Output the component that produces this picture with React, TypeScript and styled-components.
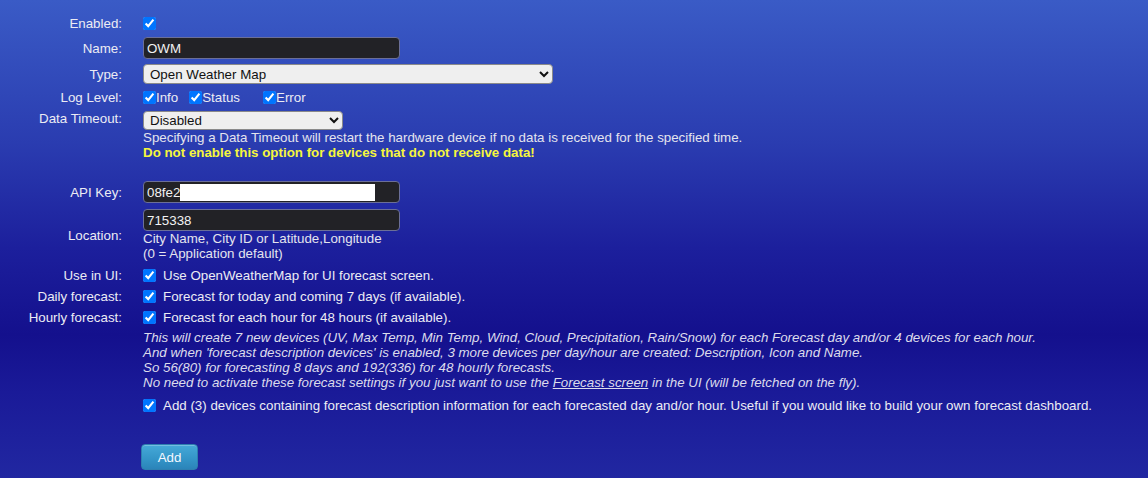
import React from 'react';
import styled, { createGlobalStyle } from 'styled-components';

const GlobalStyle = createGlobalStyle`
  html, body {
    margin: 0;
    padding: 0;
  }
  body {
    width: 1148px;
    height: 478px;
    overflow: hidden;
    font-family: 'Liberation Sans', Arial, sans-serif;
    font-size: 13.33px;
    color: #ececf4;
    background: linear-gradient(
      180deg,
      #3a5bc6 0%,
      #2a3cb0 30%,
      #1c1f9c 52%,
      #14108d 70%,
      #1a1a98 82%,
      #2127a1 100%
    );
  }
`;

const Form = styled.div`
  display: flex;
  flex-direction: column;
  width: 1148px;
`;

const Row = styled.div<{ $mt: number; $h?: number }>`
  display: grid;
  grid-template-columns: 122px 1fr;
  column-gap: 21px;
  align-items: center;
  margin-top: ${(p) => p.$mt}px;
  min-height: ${(p) => (p.$h ? `${p.$h}px` : 'auto')};
`;

const Label = styled.div<{ $top?: boolean }>`
  text-align: right;
  line-height: 15px;
  white-space: nowrap;
  align-self: ${(p) => (p.$top ? 'start' : 'center')};
`;

const Value = styled.div`
  display: flex;
  flex-direction: column;
  align-items: flex-start;
  line-height: 15px;
`;

const Inline = styled.div`
  display: flex;
  align-items: center;
  white-space: nowrap;
`;

const Check = styled.input.attrs({ type: 'checkbox', defaultChecked: true })`
  width: 13px;
  height: 13px;
  margin: 0;
  accent-color: #0075ff;
`;

const CheckText = styled.span<{ $gap?: number; $mr?: number }>`
  margin-left: ${(p) => p.$gap ?? 0}px;
  margin-right: ${(p) => p.$mr ?? 0}px;
`;

const TextInput = styled.input`
  box-sizing: border-box;
  width: 257px;
  height: 22px;
  margin: 0;
  padding: 0 3px;
  background: #222226;
  color: #f2f2f2;
  border: 1px solid #6b6f98;
  border-radius: 4px;
  font-family: 'Liberation Sans', Arial, sans-serif;
  font-size: 13.33px;
  outline: none;
`;

const InputWrap = styled.div`
  position: relative;
`;

const Redacted = styled.span`
  position: absolute;
  left: 37px;
  top: 3px;
  width: 195px;
  height: 17px;
  background: #ffffff;
`;

const Select = styled.select<{ $w: number; $h: number }>`
  box-sizing: border-box;
  width: ${(p) => p.$w}px;
  height: ${(p) => p.$h}px;
  margin: 0;
  padding: 0 2px;
  background: #efefef;
  color: #111;
  border: 1px solid #8a8a8a;
  border-radius: 4px;
  font-family: 'Liberation Sans', Arial, sans-serif;
  font-size: 13.33px;
`;

const Help = styled.div`
  color: #e4e4ee;
  white-space: nowrap;
`;

const Warning = styled.div`
  color: #f6f63c;
  font-weight: bold;
  white-space: nowrap;
`;

const Italic = styled.div`
  margin-left: 143px;
  margin-top: 3px;
  font-style: italic;
  line-height: 15px;
  color: #dcdcec;
  white-space: nowrap;

  a {
    color: inherit;
    text-decoration: underline;
  }
`;

const AddButton = styled.button`
  margin: 29px 0 0 141px;
  width: 57px;
  height: 26px;
  border: 1px solid #2d7fb0;
  border-radius: 4px;
  background: linear-gradient(180deg, #45a9d8 0%, #3394c7 60%, #2b84b9 100%);
  color: #f4f8ff;
  font-family: 'Liberation Sans', Arial, sans-serif;
  font-size: 13.33px;
  padding: 0;
  box-shadow: inset 0 1px 0 rgba(255, 255, 255, 0.25);
`;

const App = () => {
  return (
    <>
      <GlobalStyle />
      <Form>
        <Row $mt={13} $h={20}>
          <Label>Enabled:</Label>
          <Inline>
            <Check />
          </Inline>
        </Row>
        <Row $mt={2} $h={26}>
          <Label>Name:</Label>
          <Value>
            <TextInput defaultValue="OWM" />
          </Value>
        </Row>
        <Row $mt={3} $h={20}>
          <Label>Type:</Label>
          <Value>
            <Select $w={410} $h={20} defaultValue="owm">
              <option value="owm">Open Weather Map</option>
            </Select>
          </Value>
        </Row>
        <Row $mt={3} $h={20}>
          <Label>Log Level:</Label>
          <Inline>
            <Check />
            <CheckText $mr={11}>Info</CheckText>
            <Check />
            <CheckText $mr={23}>Status</CheckText>
            <Check />
            <CheckText>Error</CheckText>
          </Inline>
        </Row>
        <Row $mt={4}>
          <Label $top>Data Timeout:</Label>
          <Value>
            <Select $w={200} $h={19} defaultValue="0">
              <option value="0">Disabled</option>
            </Select>
            <Help>
              Specifying a Data Timeout will restart the hardware device if no data is received for the
              specified time.
            </Help>
            <Warning>Do not enable this option for devices that do not receive data!</Warning>
          </Value>
        </Row>
        <Row $mt={21} $h={22}>
          <Label>API Key:</Label>
          <Value>
            <InputWrap>
              <TextInput defaultValue="08fe2" />
              <Redacted />
            </InputWrap>
          </Value>
        </Row>
        <Row $mt={6}>
          <Label>Location:</Label>
          <Value>
            <TextInput defaultValue="715338" />
            <Help>City Name, City ID or Latitude,Longitude</Help>
            <Help>(0 = Application default)</Help>
          </Value>
        </Row>
        <Row $mt={4} $h={20}>
          <Label>Use in UI:</Label>
          <Inline>
            <Check />
            <CheckText $gap={7}>Use OpenWeatherMap for UI forecast screen.</CheckText>
          </Inline>
        </Row>
        <Row $mt={1} $h={20}>
          <Label>Daily forecast:</Label>
          <Inline>
            <Check />
            <CheckText $gap={7}>Forecast for today and coming 7 days (if available).</CheckText>
          </Inline>
        </Row>
        <Row $mt={1} $h={20}>
          <Label>Hourly forecast:</Label>
          <Inline>
            <Check />
            <CheckText $gap={7}>Forecast for each hour for 48 hours (if available).</CheckText>
          </Inline>
        </Row>
        <Italic>
          This will create 7 new devices (UV, Max Temp, Min Temp, Wind, Cloud, Precipitation, Rain/Snow) for
          each Forecast day and/or 4 devices for each hour.
          <br />
          And when 'forecast description devices' is enabled, 3 more devices per day/hour are created:
          Description, Icon and Name.
          <br />
          So 56(80) for forecasting 8 days and 192(336) for 48 hourly forecasts.
          <br />
          No need to activate these forecast settings if you just want to use the{' '}
          <a href="#forecast">Forecast screen</a> in the UI (will be fetched on the fly).
        </Italic>
        <Row $mt={5} $h={20}>
          <Label />
          <Inline>
            <Check />
            <CheckText $gap={7}>
              Add (3) devices containing forecast description information for each forecasted day and/or
              hour. Useful if you would like to build your own forecast dashboard.
            </CheckText>
          </Inline>
        </Row>
        <div>
          <AddButton>Add</AddButton>
        </div>
      </Form>
    </>
  );
};

export default App;
